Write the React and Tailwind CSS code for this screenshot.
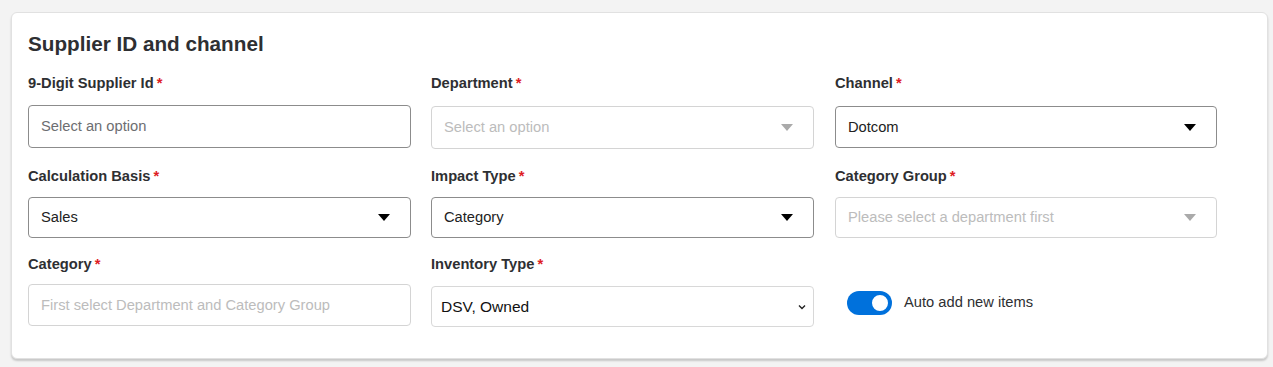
import React from 'react';

const font = { fontFamily: '"Liberation Sans", Arial, sans-serif' };

function Label({ children }) {
  return (
    <div className="h-5 text-[14.7px] leading-5 font-bold text-[#2e2f32]">
      {children}
      <span className="ml-[3px] text-[#de1c24] font-bold">*</span>
    </div>
  );
}

function Caret({ color = '#000' }) {
  return (
    <svg width="12" height="7" viewBox="0 0 12 7" className="shrink-0">
      <path d="M0 0h12L6 7z" fill={color} />
    </svg>
  );
}

function Field({ label, value, placeholder, variant = 'normal', caret = true, h = 'h-[42px]', mt = 'mt-3', className = '' }) {
  const styles = {
    normal: 'border-[#8c8c8c] text-[#222]',
    placeholder: 'border-[#8c8c8c] text-[#6d6e71]',
    disabled: 'border-[#d4d4d4] text-[#bcbcbc]',
  };
  return (
    <div className={className}>
      <Label>{label}</Label>
      <div
        className={`${mt} ${h} flex items-center justify-between rounded-[4px] border bg-white pl-3 pr-[20px] text-[14.7px] ${styles[variant]}`}
      >
        <span>{value || placeholder}</span>
        {caret && <Caret color={variant === 'disabled' ? '#aaaaaa' : '#000'} />}
      </div>
    </div>
  );
}

export default function App() {
  return (
    <div className="min-h-[367px] bg-[#f3f3f3] pt-3 pl-[11px] pr-[5px] pb-[9px]" style={font}>
      <div className="rounded-[6px] border border-[#e1e1e1] bg-white pl-[16px] pt-[19px] pb-[31px] shadow-[0_2px_2px_rgba(0,0,0,0.18)]">
        <h2 className="text-[20.7px] leading-[24px] font-bold text-[#2e2f32]">Supplier ID and channel</h2>

        {/* row 1 */}
        <div className="mt-[17px] grid grid-cols-[383px_383px_383px] gap-x-[20px]">
          <Field label="9-Digit Supplier Id" placeholder="Select an option" variant="placeholder" caret={false} h="h-[43px]" />
          <Field label="Department" placeholder="Select an option" variant="disabled" h="h-[43px]" mt="mt-[13px]" />
          <Field label="Channel" value="Dotcom" mt="mt-[13px]" className="ml-px" />
        </div>

        {/* row 2 */}
        <div className="mt-[17px] grid grid-cols-[383px_383px_383px] gap-x-[20px]">
          <Field label="Calculation Basis" value="Sales" h="h-[41px]" mt="mt-[11px]" />
          <Field label="Impact Type" value="Category" h="h-[41px]" mt="mt-[11px]" />
          <Field
            label="Category Group"
            placeholder="Please select a department first"
            variant="disabled"
            h="h-[41px]"
            mt="mt-[11px]"
            className="ml-px"
          />
        </div>

        {/* row 3 */}
        <div className="mt-[16px] grid grid-cols-[383px_383px_383px] gap-x-[20px]">
          <Field
            label="Category"
            placeholder="First select Department and Category Group"
            variant="disabled"
            caret={false}
            mt="mt-[10px]"
          />
          <div>
            <Label>Inventory Type</Label>
            <div className="mt-[12px] h-[41px] flex items-center justify-between rounded-[4px] border border-[#d8d8d8] bg-white pl-[9px] pr-[6px] text-[15.5px] text-[#111]">
              <span>DSV, Owned</span>
              <svg width="10" height="10" viewBox="0 0 10 10" fill="none" stroke="#222" strokeWidth="1.4">
                <path d="M2 3.5l3 3 3-3" />
              </svg>
            </div>
          </div>
          <div className="ml-px flex items-end pb-[4px]">
            <div className="flex h-[41px] items-center gap-[12px] pl-[12px]">
              <div className="flex h-[24px] w-[45px] items-center justify-end rounded-full bg-[#0071dc] pr-[2px]">
                <div className="h-[20px] w-[20px] rounded-full border-2 border-[#0071dc] bg-white" />
              </div>
              <span className="text-[14.7px] text-[#2e2f32]">Auto add new items</span>
            </div>
          </div>
        </div>
      </div>
    </div>
  );
}
